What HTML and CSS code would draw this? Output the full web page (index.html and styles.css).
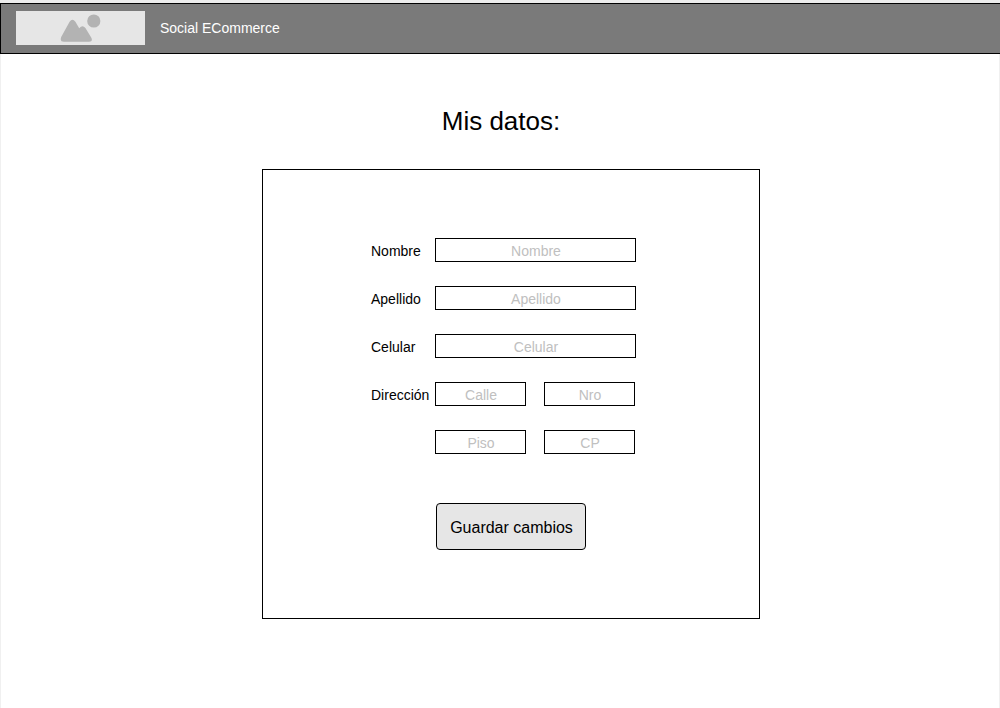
FILE: index.html
```html
<!DOCTYPE html>
<html lang="es">
<head>
  <meta charset="utf-8">
  <meta name="viewport" content="width=device-width, initial-scale=1">
  <title>Social ECommerce</title>
  <link rel="stylesheet" href="styles.css">
</head>
<body class="page">
  <header class="topbar">
    <div class="logo">
      <svg class="logo-icon" viewBox="0 0 42 30" aria-hidden="true">
        <path d="M1.2 24 9.6 8.8Q12.4 4.6 15.4 8.8L19.2 15.2Q22.6 11.2 25.4 15L31.2 24.4Q33.3 28.8 29 28.8H4Q-.5 28.8 1.2 24Z"/>
        <circle cx="33.8" cy="8" r="6.6"/>
      </svg>
    </div>
    <span class="brand">Social ECommerce</span>
  </header>
  <main class="content">
    <h1 class="title">Mis datos:</h1>
    <form class="panel">
      <div class="rows">
        <div class="row">
          <label class="label" for="nombre">Nombre</label>
          <input class="field" id="nombre" type="text" placeholder="Nombre">
        </div>
        <div class="row">
          <label class="label" for="apellido">Apellido</label>
          <input class="field" id="apellido" type="text" placeholder="Apellido">
        </div>
        <div class="row">
          <label class="label" for="celular">Celular</label>
          <input class="field" id="celular" type="tel" placeholder="Celular">
        </div>
        <div class="row">
          <label class="label" for="calle">Dirección</label>
          <div class="address">
            <input class="field" id="calle" type="text" placeholder="Calle">
            <input class="field" type="text" placeholder="Nro" aria-label="Nro">
            <input class="field" type="text" placeholder="Piso" aria-label="Piso">
            <input class="field" type="text" placeholder="CP" aria-label="CP">
          </div>
        </div>
      </div>
      <button class="save" type="submit">Guardar cambios</button>
    </form>
  </main>
</body>
</html>
```

FILE: styles.css
```css
* {
  box-sizing: border-box;
}

.page {
  display: flex;
  flex-direction: column;
  min-height: 100vh;
  margin: 0;
  border-top: 3px solid #ececec;
  background: #fff;
  color: #000;
  font: 14px/18px "Liberation Sans", Arial, sans-serif;
}

.topbar {
  display: flex;
  align-items: center;
  gap: 15px;
  padding: 7px 15px 8px;
  border: 1px solid #000;
  border-right: 0;
  background: #7a7a7a;
}

.logo {
  display: flex;
  justify-content: center;
  width: 129px;
  height: 34px;
  padding-top: 2px;
  padding-left: 1px;
  background: #e6e6e6;
}

.logo-icon {
  width: 42px;
  height: 30px;
  fill: #b3b3b3;
}

.brand {
  color: #fff;
}

.content {
  flex: 1;
  display: flex;
  flex-direction: column;
  align-items: center;
  padding: 52px 0;
  border: solid #f0f0f0;
  border-width: 0 1px;
}

.title {
  margin: 0 0 33px;
  padding-left: 2px;
  font-size: 26px;
  font-weight: 400;
  line-height: 30px;
}

.panel {
  display: flex;
  flex-direction: column;
  align-items: center;
  gap: 49px;
  width: 100%;
  max-width: 498px;
  margin-left: 22px;
  padding: 68px 0;
  border: 1px solid #000;
}

.rows {
  display: grid;
  gap: 24px;
  width: 100%;
  padding: 0 123px 0 108px;
}

.row {
  display: grid;
  grid-template-columns: 64px 1fr;
}

.label {
  padding-top: 4px;
}

.address {
  display: grid;
  grid-template-columns: 1fr 1fr;
  gap: 24px 18px;
  padding-right: 1px;
}

.field {
  width: 100%;
  min-width: 0;
  height: 24px;
  margin: 0;
  padding: 2px 0 0 1px;
  border: 1px solid #000;
  border-radius: 0;
  background: #fff;
  color: #000;
  font: inherit;
  text-align: center;
}

.field::placeholder {
  color: #c0c0c0;
  opacity: 1;
}

.save {
  height: 47px;
  padding: 2px 12px 0 13px;
  border: 1px solid #000;
  border-radius: 4px;
  background: #e6e6e6;
  color: #000;
  font: inherit;
  font-size: 16px;
}
```
